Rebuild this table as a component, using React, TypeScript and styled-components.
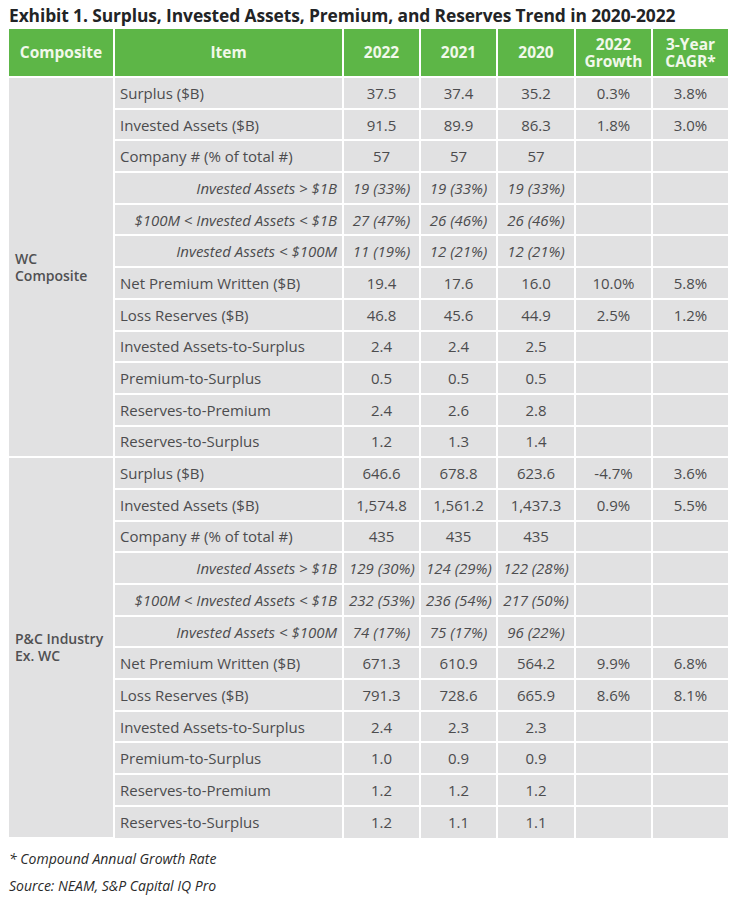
import React from "react";
import styled, { createGlobalStyle } from "styled-components";

const Global = createGlobalStyle`
  html, body { margin: 0; padding: 0; background: #ffffff; }
  body { font-family: "Open Sans", Lato, sans-serif; }
`;

const Page = styled.div`
  padding: 3px 10px 0 9px;
  width: 719px;
`;

const Title = styled.h1`
  margin: 0;
  height: 26px;
  font-size: 17.4px;
  line-height: 24px;
  font-weight: 700;
  color: #222426;
  white-space: nowrap;
  letter-spacing: -0.1px;
`;

const Table = styled.table`
  width: 719px;
  border-collapse: collapse;
  table-layout: fixed;
  font-size: 15px;
  color: #4c4c4e;
`;

const HeadCell = styled.th`
  background: #5db647;
  color: #f1f8ea;
  font-weight: 700;
  font-size: 15.5px;
  line-height: 17px;
  height: 47px;
  text-align: center;
  vertical-align: middle;
  border: 2px solid #ffffff;
  border-top: none;
  padding: 0 2px;
  &:first-child { border-left: none; }
  &:last-child { border-right: none; }
`;

const HeadLine = styled.span`
  display: block;
  height: 17px;
`;

const Row = styled.tr`
  height: 31.7px;
`;

const Cell = styled.td<{ $align?: "left" | "right" | "center"; $italic?: boolean }>`
  background: #e1e1e2;
  border: 2px solid #ffffff;
  padding: 0 5px;
  text-align: ${(p) => p.$align ?? "center"};
  font-style: ${(p) => (p.$italic ? "italic" : "normal")};
  vertical-align: middle;
  white-space: nowrap;
  overflow: hidden;
  &:last-child { border-right: none; }
`;

const GroupCell = styled.td`
  background: #e1e1e2;
  border: 2px solid #ffffff;
  border-left: none;
  padding: 0 6px;
  font-weight: 600;
  font-size: 14px;
  line-height: 17px;
  color: #505052;
  vertical-align: middle;
`;

const GroupLine = styled.span`
  display: block;
  height: 17px;
  white-space: nowrap;
`;

const LastBorder = styled.tbody`
  tr:last-child td { border-bottom: none; }
`;

const Notes = styled.div`
  margin-top: 6px;
  font-style: italic;
  font-size: 14px;
  line-height: 27px;
  color: #2a2a2a;
`;

type RowData = { label: string; sub?: boolean; v: string[] };

const wc: RowData[] = [
  { label: "Surplus ($B)", v: ["37.5", "37.4", "35.2", "0.3%", "3.8%"] },
  { label: "Invested Assets ($B)", v: ["91.5", "89.9", "86.3", "1.8%", "3.0%"] },
  { label: "Company # (% of total #)", v: ["57", "57", "57", "", ""] },
  { label: "Invested Assets > $1B", sub: true, v: ["19 (33%)", "19 (33%)", "19 (33%)", "", ""] },
  { label: "$100M < Invested Assets < $1B", sub: true, v: ["27 (47%)", "26 (46%)", "26 (46%)", "", ""] },
  { label: "Invested Assets < $100M", sub: true, v: ["11 (19%)", "12 (21%)", "12 (21%)", "", ""] },
  { label: "Net Premium Written ($B)", v: ["19.4", "17.6", "16.0", "10.0%", "5.8%"] },
  { label: "Loss Reserves ($B)", v: ["46.8", "45.6", "44.9", "2.5%", "1.2%"] },
  { label: "Invested Assets-to-Surplus", v: ["2.4", "2.4", "2.5", "", ""] },
  { label: "Premium-to-Surplus", v: ["0.5", "0.5", "0.5", "", ""] },
  { label: "Reserves-to-Premium", v: ["2.4", "2.6", "2.8", "", ""] },
  { label: "Reserves-to-Surplus", v: ["1.2", "1.3", "1.4", "", ""] },
];

const pc: RowData[] = [
  { label: "Surplus ($B)", v: ["646.6", "678.8", "623.6", "-4.7%", "3.6%"] },
  { label: "Invested Assets ($B)", v: ["1,574.8", "1,561.2", "1,437.3", "0.9%", "5.5%"] },
  { label: "Company # (% of total #)", v: ["435", "435", "435", "", ""] },
  { label: "Invested Assets > $1B", sub: true, v: ["129 (30%)", "124 (29%)", "122 (28%)", "", ""] },
  { label: "$100M < Invested Assets < $1B", sub: true, v: ["232 (53%)", "236 (54%)", "217 (50%)", "", ""] },
  { label: "Invested Assets < $100M", sub: true, v: ["74 (17%)", "75 (17%)", "96 (22%)", "", ""] },
  { label: "Net Premium Written ($B)", v: ["671.3", "610.9", "564.2", "9.9%", "6.8%"] },
  { label: "Loss Reserves ($B)", v: ["791.3", "728.6", "665.9", "8.6%", "8.1%"] },
  { label: "Invested Assets-to-Surplus", v: ["2.4", "2.3", "2.3", "", ""] },
  { label: "Premium-to-Surplus", v: ["1.0", "0.9", "0.9", "", ""] },
  { label: "Reserves-to-Premium", v: ["1.2", "1.2", "1.2", "", ""] },
  { label: "Reserves-to-Surplus", v: ["1.2", "1.1", "1.1", "", ""] },
];

function Group({ name, rows }: { name: string[]; rows: RowData[] }) {
  return (
    <>
      {rows.map((r, i) => (
        <Row key={i}>
          {i === 0 && (
            <GroupCell rowSpan={rows.length}>
              {name.map((n) => (
                <GroupLine key={n}>{n}</GroupLine>
              ))}
            </GroupCell>
          )}
          <Cell $align={r.sub ? "right" : "left"} $italic={r.sub}>
            {r.label}
          </Cell>
          {r.v.map((x, j) => (
            <Cell key={j} $italic={r.sub && j < 3}>
              {x}
            </Cell>
          ))}
        </Row>
      ))}
    </>
  );
}

export default function App() {
  return (
    <Page>
      <Global />
      <Title>Exhibit 1. Surplus, Invested Assets, Premium, and Reserves Trend in 2020-2022</Title>
      <Table>
        <colgroup>
          <col style={{ width: 105 }} />
          <col style={{ width: 229 }} />
          <col style={{ width: 77 }} />
          <col style={{ width: 77 }} />
          <col style={{ width: 78 }} />
          <col style={{ width: 77 }} />
          <col style={{ width: 76 }} />
        </colgroup>
        <thead>
          <tr>
            <HeadCell>Composite</HeadCell>
            <HeadCell>Item</HeadCell>
            <HeadCell>2022</HeadCell>
            <HeadCell>2021</HeadCell>
            <HeadCell>2020</HeadCell>
            <HeadCell>
              <HeadLine>2022</HeadLine>
              <HeadLine>Growth</HeadLine>
            </HeadCell>
            <HeadCell>
              <HeadLine>3-Year</HeadLine>
              <HeadLine>CAGR*</HeadLine>
            </HeadCell>
          </tr>
        </thead>
        <LastBorder>
          <Group name={["WC", "Composite"]} rows={wc} />
          <Group name={["P&C Industry", "Ex. WC"]} rows={pc} />
        </LastBorder>
      </Table>
      <Notes>
        <div>* Compound Annual Growth Rate</div>
        <div>Source: NEAM, S&amp;P Capital IQ Pro</div>
      </Notes>
    </Page>
  );
}
